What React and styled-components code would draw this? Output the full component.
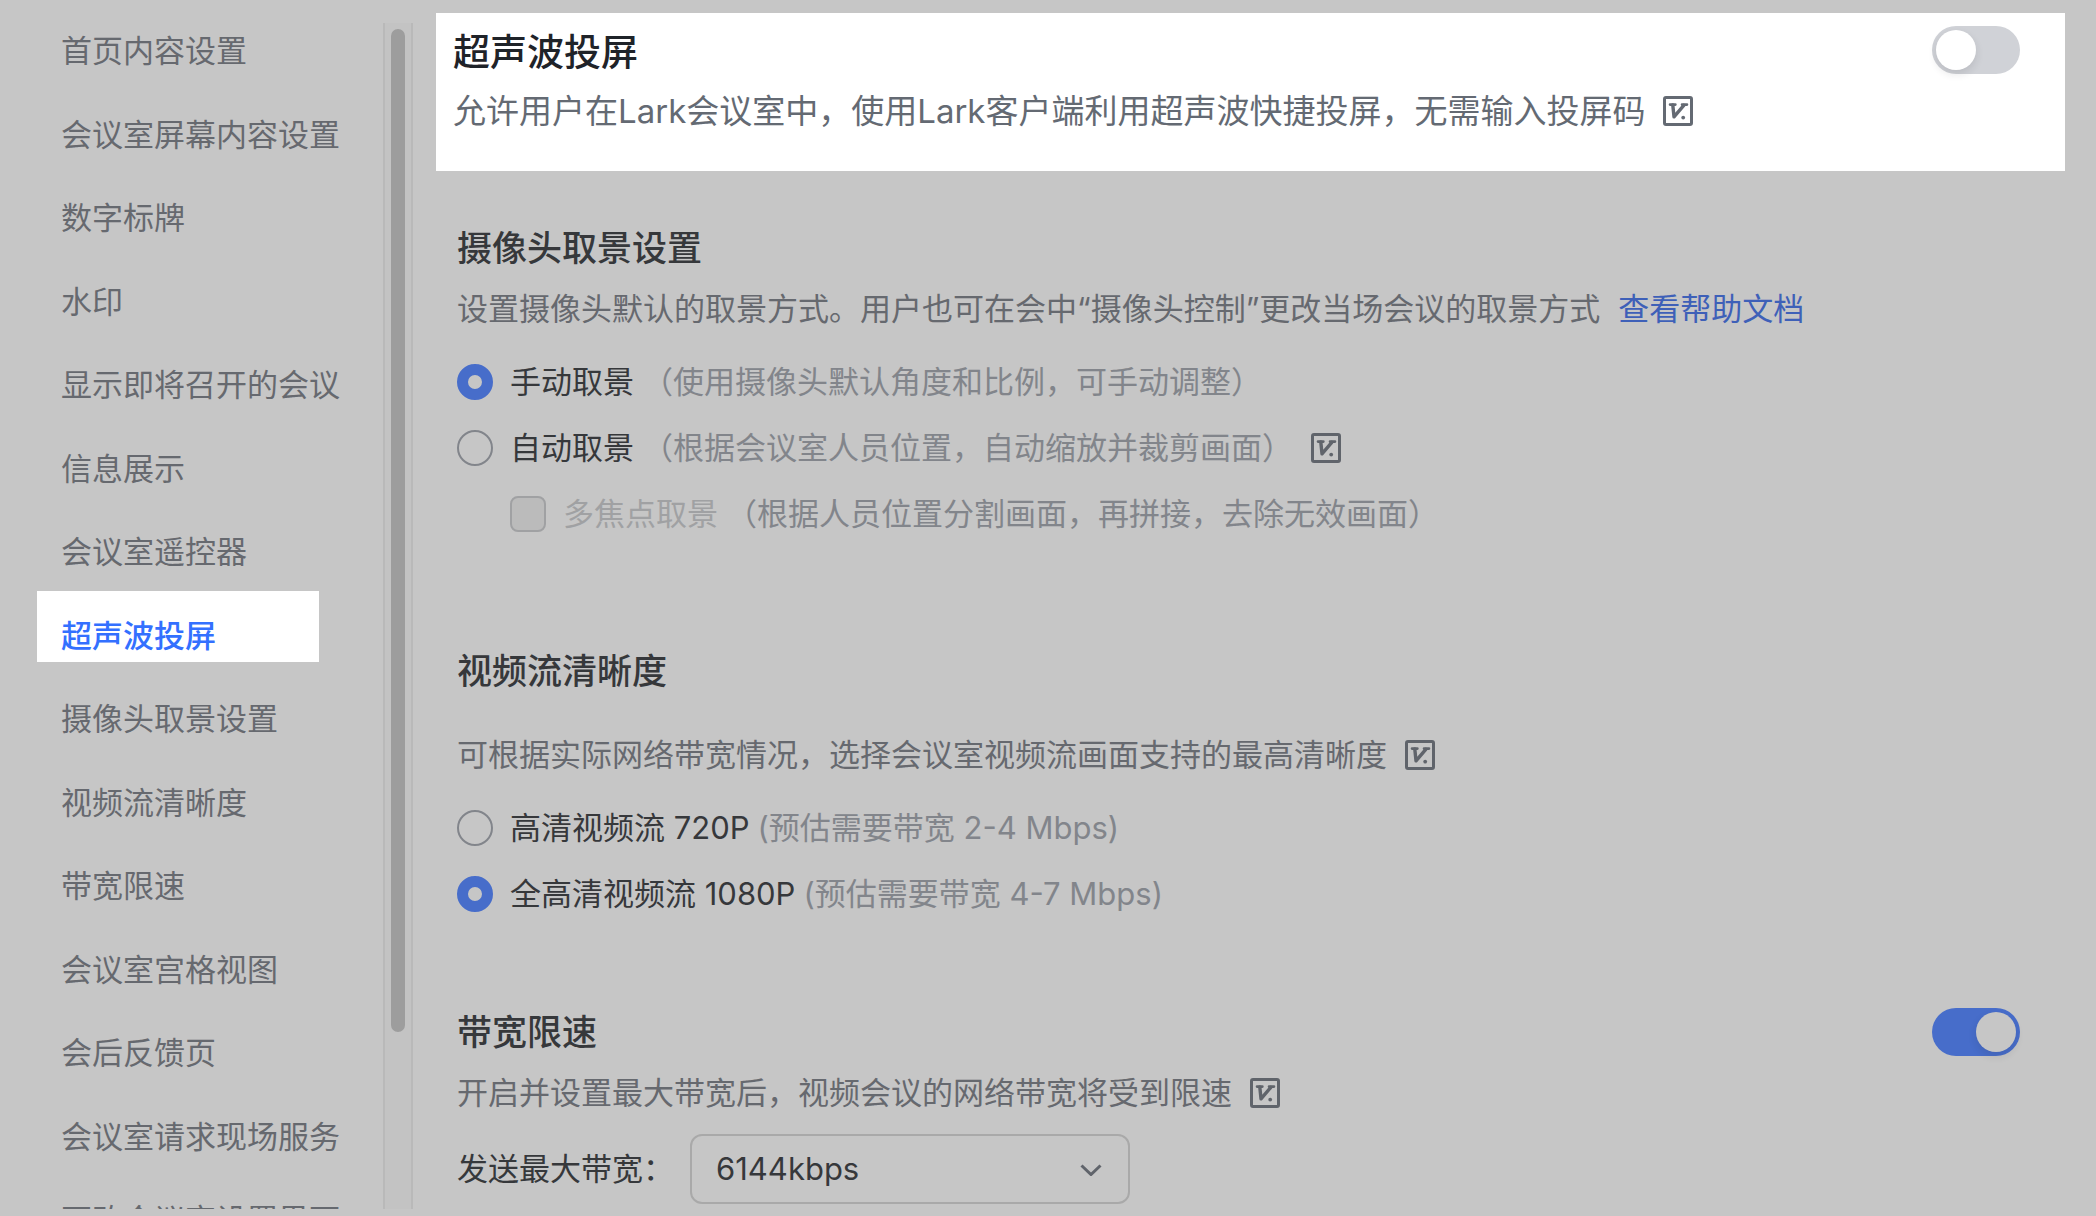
import React, { useState } from "react";
import styled, { createGlobalStyle } from "styled-components";

const menu = [
  "首页内容设置",
  "会议室屏幕内容设置",
  "数字标牌",
  "水印",
  "显示即将召开的会议",
  "信息展示",
  "会议室遥控器",
  "超声波投屏",
  "摄像头取景设置",
  "视频流清晰度",
  "带宽限速",
  "会议室宫格视图",
  "会后反馈页",
  "会议室请求现场服务",
  "更改会议室设置界面",
];

const VersionIcon = ({ light }) => (
  <IconSvg viewBox="0 0 30 30" $light={light} aria-hidden="true">
    <rect x="1.5" y="1.5" width="27" height="27" rx="1.5" strokeWidth="3" />
    <path d="M7 8.6H12.4M19 8.6H24" strokeWidth="2.6" />
    <path d="M9.8 9L11 20.8L20.8 9.4" strokeWidth="3.4" />
    <circle cx="20.2" cy="21.6" r="1.9" stroke="none" />
  </IconSvg>
);

const Toggle = ({ label, checked, onChange }) => (
  <Switch
    type="button"
    role="switch"
    aria-checked={checked}
    aria-label={label}
    $on={checked}
    onClick={() => onChange(!checked)}
  />
);

const App = () => {
  const [active, setActive] = useState("超声波投屏");
  const [ultrasonic, setUltrasonic] = useState(false);
  const [limited, setLimited] = useState(true);
  const [framing, setFraming] = useState("manual");
  const [quality, setQuality] = useState("1080");

  return (
    <Page>
      <GlobalStyle />
      <Sidebar>
        <Menu>
          {menu.map(item => (
            <li key={item}>
              <MenuLink
                href="#"
                $active={item === active}
                onClick={e => {
                  e.preventDefault();
                  setActive(item);
                }}
              >
                {item}
              </MenuLink>
            </li>
          ))}
        </Menu>
      </Sidebar>
      <Track>
        <Thumb />
      </Track>
      <Main>
        <Card>
          <Heading>
            <Title $light>超声波投屏</Title>
            <Toggle label="超声波投屏" checked={ultrasonic} onChange={setUltrasonic} />
          </Heading>
          <Description $light>
            允许用户在Lark会议室中，使用Lark客户端利用超声波快捷投屏，无需输入投屏码
            <VersionIcon light />
          </Description>
        </Card>

        <Section>
          <Heading>
            <Title>摄像头取景设置</Title>
          </Heading>
          <Description>
            设置摄像头默认的取景方式。用户也可在会中“摄像头控制”更改当场会议的取景方式
            <HelpLink href="#">查看帮助文档</HelpLink>
          </Description>
          <Options>
            <Option>
              <Radio
                name="framing"
                checked={framing === "manual"}
                onChange={() => setFraming("manual")}
              />
              手动取景 <Hint>（使用摄像头默认角度和比例，可手动调整）</Hint>
            </Option>
            <Option>
              <Radio
                name="framing"
                checked={framing === "auto"}
                onChange={() => setFraming("auto")}
              />
              自动取景 <Hint>（根据会议室人员位置，自动缩放并裁剪画面）</Hint>
              <VersionIcon />
            </Option>
            <Option $nested $disabled>
              <Checkbox disabled />
              多焦点取景 <Hint>（根据人员位置分割画面，再拼接，去除无效画面）</Hint>
            </Option>
          </Options>
        </Section>

        <Section $space="115px">
          <Heading>
            <Title>视频流清晰度</Title>
          </Heading>
          <Description $space="36px">
            可根据实际网络带宽情况，选择会议室视频流画面支持的最高清晰度
            <VersionIcon />
          </Description>
          <Options>
            <Option>
              <Radio
                name="quality"
                checked={quality === "720"}
                onChange={() => setQuality("720")}
              />
              高清视频流 720P <Hint>(预估需要带宽 2-4 Mbps)</Hint>
            </Option>
            <Option>
              <Radio
                name="quality"
                checked={quality === "1080"}
                onChange={() => setQuality("1080")}
              />
              全高清视频流 1080P <Hint>(预估需要带宽 4-7 Mbps)</Hint>
            </Option>
          </Options>
        </Section>

        <Section $space="96px">
          <Heading>
            <Title>带宽限速</Title>
            <Toggle label="带宽限速" checked={limited} onChange={setLimited} />
          </Heading>
          <Description>
            开启并设置最大带宽后，视频会议的网络带宽将受到限速
            <VersionIcon />
          </Description>
          <Field>
            <label htmlFor="bandwidth">发送最大带宽：</label>
            <SelectBox>
              <Select id="bandwidth" defaultValue="6144">
                <option value="2048">2048kbps</option>
                <option value="4096">4096kbps</option>
                <option value="6144">6144kbps</option>
              </Select>
              <Chevron viewBox="0 0 22 12" aria-hidden="true">
                <path d="M1.5 1.5L11 10.5L20.5 1.5" />
              </Chevron>
            </SelectBox>
          </Field>
        </Section>
      </Main>
    </Page>
  );
};

const GlobalStyle = createGlobalStyle`
  * {
    box-sizing: border-box;
  }
  body {
    margin: 0;
    background: #c6c6c6;
    font-family: Inter, "Noto Sans CJK SC", sans-serif;
    font-size: 31px;
    color: #36383b;
  }
  button, input, select {
    margin: 0;
    font: inherit;
    color: inherit;
  }
`;

const Page = styled.div`
  display: grid;
  grid-template-columns: 383px 30px minmax(0, 1fr);
  height: 100vh;
  padding-bottom: 7px;
  overflow: hidden;
`;

const Sidebar = styled.nav`
  padding: 6px 64px 0 37px;
  overflow: hidden;
`;

const Menu = styled.ul`
  display: grid;
  grid-template-columns: minmax(0, 1fr);
  grid-auto-rows: 84px 83px;
  margin: 0;
  padding: 0;
  list-style: none;
`;

const MenuLink = styled.a`
  display: block;
  padding: 19px 0 0 24px;
  line-height: 52px;
  white-space: nowrap;
  text-decoration: none;
  color: ${props => (props.$active ? "#3370ff" : "#66696f")};
  background: ${props => (props.$active ? "#fff" : "transparent")};
  font-weight: ${props => (props.$active ? 500 : 400)};
`;

const Track = styled.div`
  margin-top: 23px;
  padding: 6px 6px 0;
  border: solid #b9b9b9;
  border-width: 0 2px;
  background: #c3c3c3;
`;

const Thumb = styled.div`
  height: 85%;
  border-radius: 8px;
  background: #9d9d9d;
`;

const Main = styled.main`
  padding: 13px 31px 0 23px;
  overflow: hidden;
`;

const Card = styled.section`
  margin-bottom: 53px;
  padding: 13px 45px 36px 17px;
  background: #fff;
`;

const Section = styled.section`
  margin-top: ${props => props.$space || 0};
  padding: 0 45px 0 21px;
`;

const Heading = styled.div`
  display: flex;
  align-items: center;
  justify-content: space-between;
  height: 48px;
`;

const Title = styled.h2`
  margin: 0;
  padding-top: ${props => (props.$light ? "6px" : 0)};
  font-size: ${props => (props.$light ? "37px" : "35px")};
  font-weight: 500;
  line-height: 48px;
  color: ${props => (props.$light ? "#1f2329" : "#36383b")};
`;

const Description = styled.p`
  display: flex;
  align-items: center;
  gap: 18px;
  margin: ${props => props.$space || "13px"} 0 0;
  font-size: ${props => (props.$light ? "33px" : "31px")};
  line-height: 48px;
  white-space: nowrap;
  color: ${props => (props.$light ? "#646a73" : "#66696f")};
`;

const HelpLink = styled.a`
  color: #3e60b8;
  text-decoration: none;
`;

const Options = styled.div`
  display: grid;
  gap: 30px;
  margin-top: 31px;
`;

const Option = styled.label`
  display: flex;
  align-items: center;
  height: 36px;
  padding-left: ${props => (props.$nested ? "53px" : 0)};
  line-height: 36px;
  white-space: nowrap;
  color: ${props => (props.$disabled ? "#a0a1a3" : "#36383b")};

  svg {
    margin-left: 18px;
  }
`;

const Radio = styled.input.attrs({ type: "radio" })`
  appearance: none;
  width: 36px;
  height: 36px;
  margin-right: 17px;
  border: 2px solid #82858b;
  border-radius: 50%;

  &:checked {
    border: 11px solid #476dca;
  }
`;

const Checkbox = styled.input.attrs({ type: "checkbox" })`
  appearance: none;
  width: 36px;
  height: 36px;
  margin-right: 17px;
  border: 2px solid #a0a1a3;
  border-radius: 8px;
  background: #bbbbbb;
`;

const Hint = styled.span`
  margin-left: 8px;
  color: #82858b;
`;

const Switch = styled.button`
  width: 88px;
  height: 48px;
  padding: 4px;
  border: 0;
  border-radius: 24px;
  background: ${props => (props.$on ? "#476dca" : "#d0d2d7")};

  &::before {
    content: "";
    display: block;
    width: 40px;
    height: 40px;
    margin-left: ${props => (props.$on ? "auto" : 0)};
    border-radius: 50%;
    background: ${props => (props.$on ? "#c6c6c6" : "#fff")};
    box-shadow: 0 4px 8px rgba(31, 35, 41, 0.12);
  }
`;

const Field = styled.div`
  display: flex;
  align-items: center;
  gap: 16px;
  margin-top: 17px;
  line-height: 48px;
`;

const SelectBox = styled.div`
  position: relative;
  width: 440px;
`;

const Select = styled.select`
  appearance: none;
  width: 100%;
  height: 70px;
  padding: 0 24px;
  border: 2px solid #a9a9a9;
  border-radius: 12px;
  background: transparent;
`;

const Chevron = styled.svg`
  position: absolute;
  top: 30px;
  right: 28px;
  width: 22px;
  height: 12px;
  fill: none;
  stroke: #60646b;
  stroke-width: 3;
  pointer-events: none;
`;

const IconSvg = styled.svg`
  flex: none;
  width: 30px;
  height: 30px;
  fill: none;
  stroke: ${props => (props.$light ? "#646a73" : "#60646b")};
  stroke-linecap: round;
  stroke-linejoin: round;

  circle {
    fill: ${props => (props.$light ? "#646a73" : "#60646b")};
  }
`;

export default App;
